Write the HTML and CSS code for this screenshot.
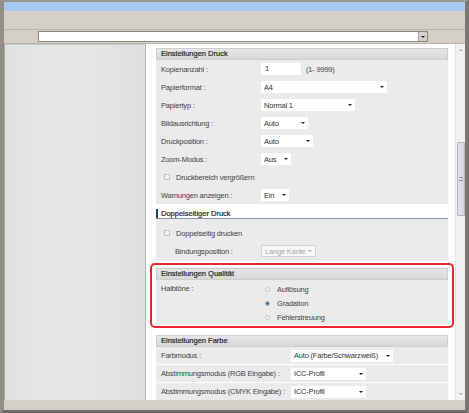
FILE: index.html
```html
<!DOCTYPE html>
<html lang="de">
<head>
<meta charset="utf-8">
<title>Druckeinstellungen</title>
<link rel="stylesheet" href="styles.css">
</head>
<body>
<div class="frame">
  <div class="titlebar"></div>
  <div class="toolbar"></div>
  <div class="addrbar">
    <div class="combo"><span class="combo-btn"><span class="tri"></span></span></div>
  </div>
  <div class="main">
    <div class="sidebar"></div>
    <div class="content">
      <div class="section">
        <div class="head">Einstellungen Druck</div>
        <div class="body">
          <div class="row"><span class="lbl">Kopienanzahl :</span><span class="inp">1</span><span class="hint">(1- 9999)</span></div>
          <div class="row"><span class="lbl">Papierformat :</span><span class="sel w-format">A4<span class="arr"></span></span></div>
          <div class="row"><span class="lbl">Papiertyp :</span><span class="sel w-typ">Normal 1<span class="arr"></span></span></div>
          <div class="row"><span class="lbl">Bildausrichtung :</span><span class="sel w-bild">Auto<span class="arr"></span></span></div>
          <div class="row"><span class="lbl">Druckposition :</span><span class="sel w-pos">Auto<span class="arr"></span></span></div>
          <div class="row"><span class="lbl">Zoom-Modus :</span><span class="sel w-zoom">Aus<span class="arr"></span></span></div>
          <div class="row"><span class="chk"></span><span>Druckbereich vergrößern</span></div>
          <div class="row"><span class="lbl">Warnungen anzeigen :</span><span class="sel w-warn">Ein<span class="arr"></span></span></div>
        </div>
      </div>
      <div class="section sec-duplex">
        <div class="h2"><span class="bar"></span>Doppelseitiger Druck</div>
        <div class="body body-duplex">
          <div class="row"><span class="chk"></span><span>Doppelseitig drucken</span></div>
          <div class="row"><span class="lbl lbl-indent">Bindungsposition :</span><span class="sel disabled w-bind">Lange Kante<span class="arr"></span></span></div>
        </div>
      </div>
      <div class="highlight">
        <div class="section">
          <div class="head">Einstellungen Qualität</div>
          <div class="body body-q">
            <div class="qgrid">
              <span class="qlbl">Halbtöne :</span>
              <div class="radios">
                <div class="rrow"><span class="radio"></span>Auflösung</div>
                <div class="rrow"><span class="radio checked"></span>Gradation</div>
                <div class="rrow"><span class="radio"></span>Fehlerstreuung</div>
              </div>
            </div>
          </div>
        </div>
      </div>
      <div class="section sec-color">
        <div class="head">Einstellungen Farbe</div>
        <div class="body">
          <div class="row row-sep"><span class="lbl lbl-wide">Farbmodus :</span><span class="sel w-farb">Auto (Farbe/Schwarzweiß)<span class="arr"></span></span></div>
          <div class="row row-sep"><span class="lbl lbl-wide">Abstimmungsmodus (RGB Eingabe) :</span><span class="sel w-icc">ICC-Profil<span class="arr"></span></span></div>
          <div class="row row-sep"><span class="lbl lbl-wide">Abstimmungsmodus (CMYK Eingabe) :</span><span class="sel w-icc">ICC-Profil<span class="arr"></span></span></div>
        </div>
      </div>
    </div>
    <div class="vscroll">
      <div class="sb-btn"><span class="sb-up"></span></div>
      <div class="sb-thumb"><span class="grip"></span></div>
      <div class="sb-fill"></div>
      <div class="sb-btn"><span class="sb-down"></span></div>
    </div>
  </div>
  <div class="statusbar"></div>
</div>
</body>
</html>
```
FILE: styles.css
```css
* { box-sizing: border-box; }
html, body { margin: 0; padding: 0; }
body {
  background: #d4d0c8;
  font-family: "Liberation Sans", Arial, sans-serif;
  font-size: 7.5px;
  color: #444;
}
.frame {
  width: 469px;
  height: 413px;
  background: #d4d0c8;
  border-left: 4px solid #918d87;
  border-right: 4px solid #7a7671;
  border-top: 2px solid #9a968f;
  border-bottom: 3px solid #6f6c67;
  display: flex;
  flex-direction: column;
  overflow: hidden;
}
.titlebar { height: 9px; background: #a7c9ef; flex: none; }
.toolbar { height: 19px; border-bottom: 1px solid #b9b5ad; flex: none; }
.addrbar { height: 13px; padding-left: 34px; padding-top: 1px; flex: none; }
.combo {
  width: 390px;
  height: 11px;
  background: #fff;
  border: 1px solid #8a8782;
  display: flex;
  justify-content: flex-end;
}
.combo-btn {
  width: 9px;
  height: 9px;
  background: #d4d0c8;
  border-left: 1px solid #a09c96;
  display: flex;
  align-items: center;
  justify-content: center;
}
.tri {
  width: 0; height: 0;
  border-left: 2px solid transparent;
  border-right: 2px solid transparent;
  border-top: 2px solid #111;
}
.main {
  height: 357px;
  flex: none;
  display: flex;
  border-top: 1px solid #b7b3ab;
}
.sidebar {
  width: 142px;
  flex: none;
  border-top: 1px solid #c9c9c9;
  border-left: 1px solid #a8a6a2;
  border-right: 1px solid #b3b3b3;
  background: linear-gradient(to right, #e0e2e2 0%, #e6e8e7 35%, #e4e6e6 65%, #dcdee0 100%);
}
.content {
  width: 309px;
  flex: none;
  background: #fff;
  padding: 4px 7px 0 10px;
  overflow: hidden;
}
.section { width: 292px; }
.head {
  height: 12px;
  line-height: 10px;
  padding-left: 4px;
  color: #262626;
  border: 1px solid #cdcdcd;
  background: linear-gradient(#e6e6e6, #d8d8d8);
  -webkit-text-stroke: 0.2px #262626;
}
.body { background: #ebebeb; }
.row {
  height: 18px;
  display: flex;
  align-items: center;
  padding-left: 5px;
  white-space: nowrap;
  letter-spacing: -0.2px;
}
.row-sep { height: 18px; border-bottom: 1px solid #fff; }
.lbl { width: 100px; flex: none; }
.lbl-indent { width: 86px; margin-left: 14px; }
.lbl-wide { width: 130px; }
.inp {
  width: 40px;
  height: 12px;
  background: #fff;
  padding-left: 4px;
  line-height: 12px;
  color: #333;
}
.hint { margin-left: 5px; }
.sel {
  height: 12px;
  background: #fff;
  display: flex;
  align-items: center;
  justify-content: space-between;
  padding: 0 3px 0 3px;
  color: #333;
}
.arr {
  width: 0; height: 0;
  border-left: 2px solid transparent;
  border-right: 2px solid transparent;
  border-top: 2px solid #222;
  flex: none;
}
.sel.disabled {
  border: 1px solid #d2d2d2;
  color: #a9a9a9;
  background: #f7f7f7;
}
.sel.disabled .arr { border-top-color: #b3b3b3; }
.w-format { width: 126px; }
.w-typ { width: 94px; }
.w-bild { width: 47px; }
.w-pos { width: 52px; }
.w-zoom { width: 30px; }
.w-warn { width: 28px; }
.w-bind { width: 55px; }
.w-farb { width: 102px; }
.w-icc { width: 75px; }
.chk {
  width: 6px;
  height: 6px;
  margin-left: 3px;
  margin-right: 6px;
  border: 1px solid #c4c4c4;
  background: #f3f3f3;
  flex: none;
}
.sec-duplex { margin-top: 4px; }
.h2 {
  height: 11px;
  display: flex;
  align-items: center;
  border-bottom: 1px solid #7d94ab;
  color: #1e1e1e;
  background: #fff;
  -webkit-text-stroke: 0.2px #1e1e1e;
}
.h2 .bar {
  width: 2px;
  height: 9px;
  background: #1f3f6c;
  margin-right: 3px;
}
.body-duplex { padding-top: 5px; }
.highlight {
  margin: 3px -6px 0 -6px;
  border: 2px solid #e8262f;
  border-radius: 5px;
  padding: 3px 4px 1px 4px;
}
.body-q { padding: 2px 0 1px 5px; }
.qgrid {
  display: grid;
  grid-template-columns: 104px auto;
  letter-spacing: -0.2px;
}
.qlbl { height: 14px; line-height: 14px; }
.rrow {
  height: 14px;
  display: flex;
  align-items: center;
}
.radio {
  width: 5px;
  height: 5px;
  border-radius: 50%;
  border: 1px solid #c6c6c6;
  background: #f4f4f4;
  margin-right: 7px;
  flex: none;
}
.radio.checked {
  border-color: #9aa8b6;
  background: radial-gradient(circle, #3f6690 0 1.2px, #dfe6ee 1.6px);
}
.sec-color { margin-top: 7px; }
.vscroll {
  width: 10px;
  flex: none;
  background: #f1f1f1;
  border-left: 1px solid #e2e2e2;
  display: flex;
  flex-direction: column;
  align-items: center;
}
.sb-btn {
  height: 12px;
  width: 8px;
  display: flex;
  align-items: center;
  justify-content: center;
  flex: none;
}
.sb-up, .sb-down {
  width: 0; height: 0;
  border-left: 2px solid transparent;
  border-right: 2px solid transparent;
}
.sb-up { border-bottom: 2px solid #a6a6a6; }
.sb-down { border-top: 2px solid #a6a6a6; }
.sb-thumb {
  margin-top: 86px;
  width: 8px;
  height: 74px;
  flex: none;
  background: linear-gradient(to right, #e4e4e6, #d4d5d9);
  border: 1px solid #b4b6bb;
  border-radius: 1px;
  display: flex;
  align-items: center;
  justify-content: center;
}
.grip {
  width: 4px;
  height: 4px;
  border-top: 1px solid #8e9096;
  border-bottom: 1px solid #8e9096;
}
.sb-fill { flex: 1; }
.statusbar { height: 10px; flex: none; }
```
